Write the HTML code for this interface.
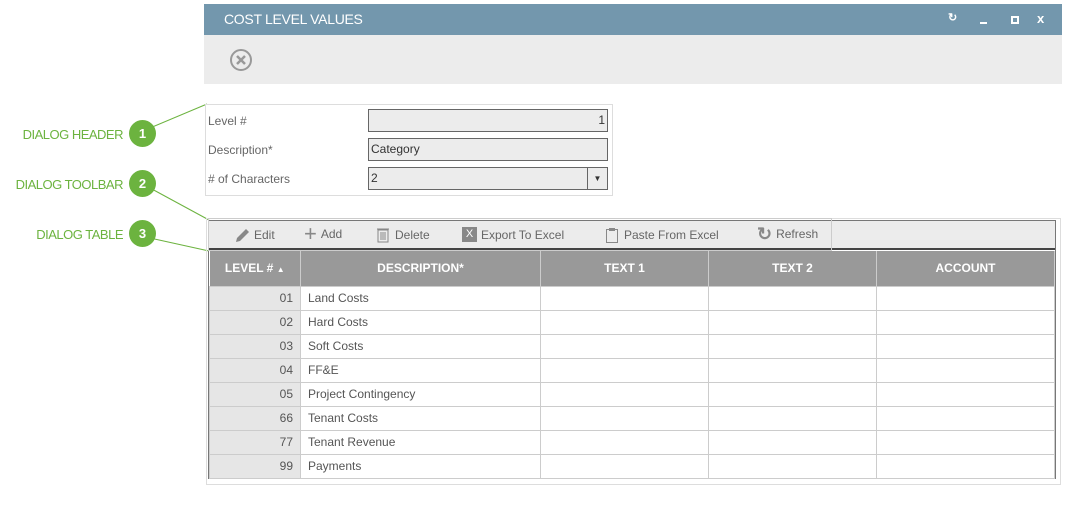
<!DOCTYPE html>
<html><head><style>
*{box-sizing:border-box;margin:0;padding:0}
body{width:1066px;height:526px;background:#fff;font-family:"Liberation Sans",sans-serif;position:relative;overflow:hidden;color:#444}
.a{position:absolute}
.lbl{position:absolute;font-size:13px;color:#6cb33f;text-align:right;width:123px;left:0;letter-spacing:-0.5px}
.circ{position:absolute;width:27px;height:27px;border-radius:50%;background:#6cb33f;color:#fff;font-size:13px;font-weight:bold;text-align:center;line-height:27px;left:129px}
.flab{position:absolute;left:208px;font-size:12px;color:#666}
.inp{position:absolute;left:368px;width:240px;height:23px;border:1px solid #666;background:#ececec;font-size:12px;line-height:21px;padding:0 2px;color:#333}
.tb{position:absolute;top:227px;font-size:12px;color:#666;display:flex;align-items:center;gap:4px}
table{border-collapse:collapse;position:absolute;left:209px;top:251px;width:846px}
th{background:#999;color:#fff;font-size:12px;font-weight:bold;height:35px;border-right:1px solid #ccc}
td{height:24px;border:1px solid #ccc;font-size:12px;color:#555;padding:0 7px}
td.n{background:#e6e6e6;text-align:right}
</style></head><body>
<div class="a" style="left:204px;top:4px;width:858px;height:31px;background:#7397ad"></div>
<div class="a" style="left:224px;top:11px;color:#fff;font-size:14px;letter-spacing:-0.3px">COST LEVEL VALUES</div>
<div class="a" style="left:948px;top:11px;color:#fff;font-size:11px;font-weight:bold">&#x21bb;</div>
<div class="a" style="left:980px;top:22px;width:7px;height:2px;background:#fff"></div>
<div class="a" style="left:1011px;top:16px;width:8px;height:8px;border:2px solid #fff"></div>
<div class="a" style="left:1037px;top:11px;color:#fff;font-size:13px;font-weight:bold">x</div>
<div class="a" style="left:204px;top:35px;width:858px;height:49px;background:#ececec"></div>
<svg class="a" style="left:228px;top:48px" width="26" height="26"><circle cx="13" cy="12" r="10" fill="none" stroke="#999" stroke-width="2"/><path d="M9 8l8 8M17 8l-8 8" stroke="#999" stroke-width="2.5"/></svg>

<svg class="a" style="left:0;top:0" width="1066" height="526"><g stroke="#6cb33f" stroke-width="1"><line x1="150" y1="128" x2="207" y2="104"/><line x1="150" y1="188" x2="209" y2="220"/><line x1="150" y1="238" x2="209" y2="251"/></g></svg>
<div class="lbl" style="top:127px">DIALOG HEADER</div><div class="circ" style="top:120px">1</div>
<div class="lbl" style="top:177px">DIALOG TOOLBAR</div><div class="circ" style="top:170px">2</div>
<div class="lbl" style="top:227px">DIALOG TABLE</div><div class="circ" style="top:220px">3</div>

<div class="a" style="left:205px;top:104px;width:408px;height:92px;border:1px solid #ddd"></div>
<div class="flab" style="top:114px">Level #</div>
<div class="flab" style="top:143px">Description*</div>
<div class="flab" style="top:172px"># of Characters</div>
<div class="inp" style="top:109px;text-align:right">1</div>
<div class="inp" style="top:138px">Category</div>
<div class="inp" style="top:167px">2<div class="a" style="right:0;top:0;width:20px;height:21px;border-left:1px solid #666;font-size:8px;text-align:center;line-height:21px">&#9660;</div></div>

<div class="a" style="left:206px;top:218px;width:855px;height:267px;border:1px solid #ddd"></div>
<div class="a" style="left:208px;top:220px;width:848px;height:259px;border:1px solid #777"></div>
<div class="a" style="left:209px;top:221px;width:846px;height:29px;background:#ececec;border-bottom:2px solid #444"></div>
<div class="a" style="left:208px;top:218px;width:624px;height:33px;border:1px solid #ccc"></div>
<div class="tb" style="left:234px"><svg width="16" height="16"><path d="M2 15l1-4 9-9 3 3-9 9z" fill="#888"/></svg>Edit</div>
<div class="tb" style="left:304px"><span style="font-size:22px;color:#888;line-height:14px">+</span>Add</div>
<div class="tb" style="left:375px"><svg width="16" height="16"><rect x="3" y="3" width="10" height="12" fill="none" stroke="#888"/><path d="M2 2h12M6 5v8M8 5v8M10 5v8" stroke="#888"/></svg>Delete</div>
<div class="tb" style="left:462px"><span style="background:#888;color:#fff;width:15px;height:15px;font-size:11px;text-align:center;line-height:15px">X</span>Export To Excel</div>
<div class="tb" style="left:604px"><svg width="16" height="16"><rect x="2.5" y="2.5" width="11" height="13" fill="none" stroke="#888"/><rect x="5" y="1" width="6" height="3" fill="#888"/></svg>Paste From Excel</div>
<div class="tb" style="left:757px"><span style="font-size:18px;color:#888;line-height:14px;font-weight:bold">&#x21bb;</span>Refresh</div>

<table>
<tr><th style="width:91px">LEVEL # <span style="font-size:8px">&#9650;</span></th><th style="width:240px">DESCRIPTION*</th><th style="width:168px">TEXT 1</th><th style="width:168px">TEXT 2</th><th>ACCOUNT</th></tr>
<tr><td class="n">01</td><td>Land Costs</td><td></td><td></td><td></td></tr>
<tr><td class="n">02</td><td>Hard Costs</td><td></td><td></td><td></td></tr>
<tr><td class="n">03</td><td>Soft Costs</td><td></td><td></td><td></td></tr>
<tr><td class="n">04</td><td>FF&amp;E</td><td></td><td></td><td></td></tr>
<tr><td class="n">05</td><td>Project Contingency</td><td></td><td></td><td></td></tr>
<tr><td class="n">66</td><td>Tenant Costs</td><td></td><td></td><td></td></tr>
<tr><td class="n">77</td><td>Tenant Revenue</td><td></td><td></td><td></td></tr>
<tr><td class="n">99</td><td>Payments</td><td></td><td></td><td></td></tr>
</table>
</body></html>
